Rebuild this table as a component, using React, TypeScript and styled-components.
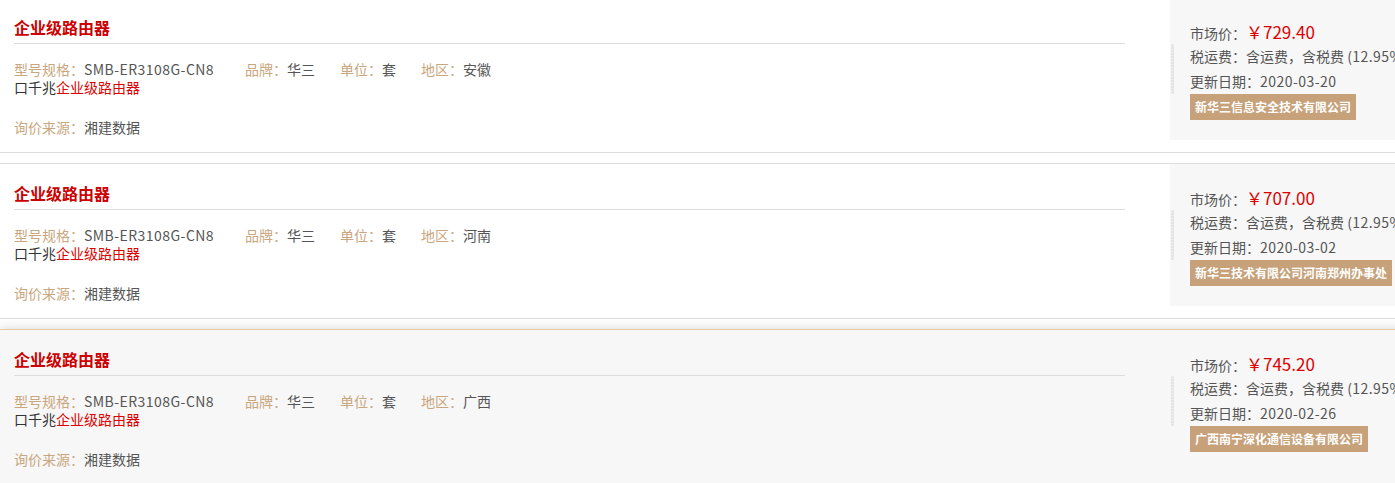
import React from "react";
import styled, { createGlobalStyle, css } from "styled-components";

const GlobalStyle = createGlobalStyle`
  html, body {
    margin: 0;
    padding: 0;
    overflow: hidden;
    background: #fff;
  }
  body {
    font-family: "Noto Sans CJK SC", sans-serif;
    font-size: 14px;
    color: #555;
  }
`;

const List = styled.div`
  margin-top: -3px;
  width: 1500px;
`;

const Item = styled.div<{ $active?: boolean }>`
  display: flex;
  align-items: stretch;
  border-top: 1px solid #ddd;
  border-bottom: 1px solid #ddd;
  margin-bottom: 10px;
  background: #fff;
  ${(p) =>
    p.$active &&
    css`
      background: #f7f7f7;
      border-top-color: #e6c9a3;
      box-shadow: 0 -2px 10px rgba(0, 0, 0, 0.12);
    `}
`;

const Main = styled.div`
  width: 1111px;
  padding: 15px 0 16px 14px;
  margin-right: 45px;
`;

const Title = styled.div`
  font-size: 16px;
  font-weight: 700;
  line-height: 29px;
  padding-bottom: 1px;
  color: #cc0000;
  border-bottom: 1px solid #ddd;
`;

const Specs = styled.div`
  display: flex;
  margin-top: 16px;
  line-height: 18px;
  white-space: nowrap;
`;

const Spec = styled.span`
  margin-right: 31px;
  &:nth-child(n + 2) {
    margin-right: 25px;
  }
`;

const Label = styled.span`
  color: #caa67e;
`;

const Value = styled.span`
  color: #555;
`;

const Num = styled.span`
  letter-spacing: 0.45px;
`;

const Desc = styled.div`
  line-height: 18px;
  color: #333;
`;

const Hl = styled.span`
  color: #dd0000;
`;

const Source = styled.div`
  margin-top: 22px;
  line-height: 18px;
`;

const Side = styled.div`
  width: 330px;
  flex-shrink: 0;
  display: flex;
  align-items: center;
  background: #f7f7f7;
  margin-bottom: 12px;
`;

const Thumb = styled.div`
  width: 3px;
  height: 50px;
  margin-left: 1px;
  border-radius: 2px;
  background: repeating-linear-gradient(
    to bottom,
    #e4e4e4 0px,
    #e4e4e4 2px,
    #ececec 2px,
    #ececec 3px
  );
`;

const SideBody = styled.div`
  margin-left: 16px;
  white-space: nowrap;
`;

const Line = styled.div`
  line-height: 25px;
  height: 25px;
  color: #555;
`;

const Price = styled.span`
  font-size: 17px;
  color: #dd0000;
`;

const Badge = styled.span`
  display: inline-block;
  height: 26px;
  line-height: 26px;
  padding: 0 5px;
  background: #c6a179;
  color: #fff;
  font-size: 12px;
  font-weight: 700;
`;

type Row = {
  region: string;
  price: string;
  date: string;
  company: string;
  active?: boolean;
};

const rows: Row[] = [
  { region: "安徽", price: "729.40", date: "2020-03-20", company: "新华三信息安全技术有限公司" },
  { region: "河南", price: "707.00", date: "2020-03-02", company: "新华三技术有限公司河南郑州办事处" },
  { region: "广西", price: "745.20", date: "2020-02-26", company: "广西南宁深化通信设备有限公司", active: true },
];

export default function App() {
  return (
    <>
      <GlobalStyle />
      <List>
        {rows.map((r, i) => (
          <Item key={i} $active={r.active}>
            <Main>
              <Title>企业级路由器</Title>
              <Specs>
                <Spec>
                  <Label>型号规格：</Label>
                  <Value>
                    <Num>SMB-ER3108G-CN8</Num>
                  </Value>
                </Spec>
                <Spec>
                  <Label>品牌：</Label>
                  <Value>华三</Value>
                </Spec>
                <Spec>
                  <Label>单位：</Label>
                  <Value>套</Value>
                </Spec>
                <Spec>
                  <Label>地区：</Label>
                  <Value>{r.region}</Value>
                </Spec>
              </Specs>
              <Desc>
                口千兆<Hl>企业级路由器</Hl>
              </Desc>
              <Source>
                <Label>询价来源：</Label>
                <Value>湘建数据</Value>
              </Source>
            </Main>
            <Side>
              <Thumb />
              <SideBody>
                <Line>
                  市场价：<Price>￥{r.price}</Price>
                </Line>
                <Line>
                  税运费：含运费，含税费 <Num>(12.95%)</Num>
                </Line>
                <Line>
                  更新日期：<Num>{r.date}</Num>
                </Line>
                <Badge>{r.company}</Badge>
              </SideBody>
            </Side>
          </Item>
        ))}
      </List>
    </>
  );
}
